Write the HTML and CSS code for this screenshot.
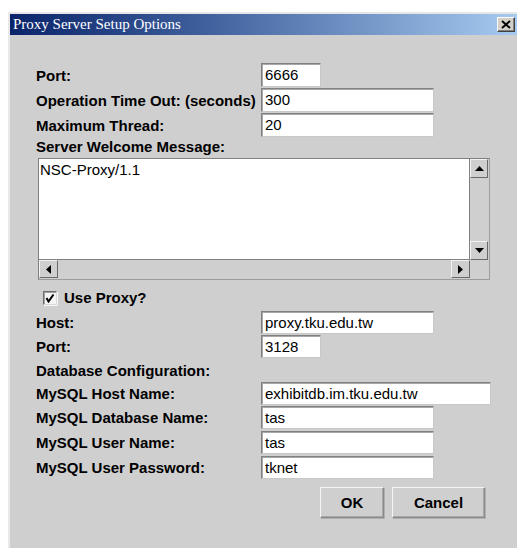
FILE: index.html
```html
<!DOCTYPE html>
<html lang="en">
<head>
<meta charset="utf-8">
<title>Proxy Server Setup Options</title>
<link rel="stylesheet" href="styles.css">
</head>
<body>
<div class="window">
  <div class="titlebar">
    <span class="title">Proxy Server Setup Options</span>
    <div class="close">
      <svg width="10" height="9" viewBox="0 0 10 9"><path d="M1 1 L9 8 M9 1 L1 8" stroke="#000" stroke-width="2"/></svg>
    </div>
  </div>
  <div class="content">
    <div class="form">
      <span class="label">Port:</span><div class="field short">6666</div>
      <span class="label">Operation Time Out: (seconds)</span><div class="field wide">300</div>
      <span class="label">Maximum Thread:</span><div class="field wide">20</div>
    </div>
    <div class="section-label">Server Welcome Message:</div>
    <div class="scrollpane">
      <div class="viewport">NSC-Proxy/1.1</div>
      <div class="vbar">
        <div class="sbtn"><svg width="9" height="5" viewBox="0 0 9 5"><path d="M4.5 0 L9 5 L0 5 Z" fill="#000"/></svg></div>
        <div class="track"></div>
        <div class="sbtn"><svg width="9" height="5" viewBox="0 0 9 5"><path d="M0 0 L9 0 L4.5 5 Z" fill="#000"/></svg></div>
      </div>
      <div class="hbar">
        <div class="sbtn"><svg width="5" height="9" viewBox="0 0 5 9"><path d="M5 0 L5 9 L0 4.5 Z" fill="#000"/></svg></div>
        <div class="track"></div>
        <div class="sbtn"><svg width="5" height="9" viewBox="0 0 5 9"><path d="M0 0 L5 4.5 L0 9 Z" fill="#000"/></svg></div>
      </div>
      <div class="corner"></div>
    </div>
    <div class="check-row">
      <div class="checkbox"><svg width="10" height="10" viewBox="0 0 10 10"><path d="M1.5 5 L3.5 8.5 L8.5 1.5" fill="none" stroke="#000" stroke-width="2"/></svg></div>
      <span class="label">Use Proxy?</span>
    </div>
    <div class="form lower">
      <span class="label">Host:</span><div class="field wide">proxy.tku.edu.tw</div>
      <span class="label">Port:</span><div class="field short">3128</div>
      <span class="label">Database Configuration:</span><div></div>
      <span class="label">MySQL Host Name:</span><div class="field wider">exhibitdb.im.tku.edu.tw</div>
      <span class="label">MySQL Database Name:</span><div class="field wide">tas</div>
      <span class="label">MySQL User Name:</span><div class="field wide">tas</div>
      <span class="label">MySQL User Password:</span><div class="field wide">tknet</div>
    </div>
    <div class="buttons">
      <div class="btn ok">OK</div>
      <div class="btn cancel">Cancel</div>
    </div>
  </div>
</div>
</body>
</html>
```
FILE: styles.css
```css
html, body {
  margin: 0;
  padding: 0;
  overflow: hidden;
  background: #ffffff;
}

body {
  font-family: "Liberation Sans", Arial, sans-serif;
  font-size: 15px;
  color: #000;
}

.window {
  margin: 12px 0 0 8px;
  height: calc(100vh - 12px);
  box-sizing: border-box;
  border-top: 2px solid #e6e6e6;
  border-left: 2px solid #e9e9e9;
  background: #cfcfcf;
  display: flex;
  flex-direction: column;
}

.titlebar {
  height: 21px;
  flex: none;
  background: linear-gradient(to right, #0a246a 0%, #3a5a98 35%, #a6caf0 100%);
  display: flex;
  align-items: center;
  justify-content: space-between;
  padding: 0 2px 0 3px;
}

.title {
  font-family: "Liberation Serif", "Times New Roman", serif;
  font-size: 15px;
  color: #fff;
  line-height: 21px;
}

.close {
  width: 16px;
  height: 13px;
  background: #d4d0c8;
  border: 1px solid;
  border-color: #ffffff #404040 #404040 #ffffff;
  box-shadow: inset -1px -1px 0 #808080;
  display: flex;
  align-items: center;
  justify-content: center;
}

.content {
  flex: 1;
  padding: 28px 32px 0 26px;
  display: flex;
  flex-direction: column;
}

.label {
  font-weight: bold;
  white-space: nowrap;
}

.form {
  display: grid;
  grid-template-columns: 225px auto;
  grid-auto-rows: 24px;
  row-gap: 1px;
  align-items: center;
}

.form.lower {
  grid-template-rows: 24px 24px 23px 24px 25px 25px 25px;
  row-gap: 0;
  align-items: start;
}

.form.lower .label {
  line-height: 23px;
}

.field {
  box-sizing: border-box;
  height: 24px;
  background: #fff;
  border: 1px solid;
  border-color: #808080 #c8c8c8 #c8c8c8 #808080;
  box-shadow: inset 1px 1px 0 #a8a8a8;
  padding: 0 3px;
  line-height: 22px;
  white-space: nowrap;
}

.form.lower .field {
  height: 23px;
  line-height: 21px;
}

.field.short { width: 60px; }
.field.wide { width: 173px; }
.field.wider { width: 230px; }

.section-label {
  font-weight: bold;
  height: 21px;
  line-height: 20px;
}

.scrollpane {
  margin-left: 2px;
  width: 452px;
  height: 122px;
  box-sizing: border-box;
  border: 1px solid;
  border-color: #808080 #9c9c9c #9c9c9c #808080;
  display: grid;
  grid-template-columns: 1fr 19px;
  grid-template-rows: 1fr 19px;
}

.viewport {
  background: #fff;
  padding: 2px 1px;
  line-height: 18px;
  border-right: 1px solid #808080;
  border-bottom: 1px solid #808080;
}

.vbar, .hbar {
  display: flex;
  background: #cfcfcf;
}

.vbar { flex-direction: column; }

.track { flex: 1; }

.sbtn {
  box-sizing: border-box;
  background: #cfcfcf;
  border: 1px solid;
  border-color: #f2f2f2 #6a6a6a #6a6a6a #f2f2f2;
  display: flex;
  align-items: center;
  justify-content: center;
}

.vbar .sbtn { width: 18px; height: 19px; }
.hbar .sbtn { width: 19px; height: 18px; }

.corner { background: #cfcfcf; }

.check-row {
  height: 31px;
  display: flex;
  align-items: center;
  gap: 7px;
  padding: 4px 0 0 7px;
  box-sizing: border-box;
}

.checkbox {
  box-sizing: border-box;
  width: 14px;
  height: 14px;
  background: #f4f4f4;
  border: 1px solid;
  border-color: #6e6e6e #d8d8d8 #d8d8d8 #6e6e6e;
  box-shadow: 1px 1px 0 #f6f6f6, inset 1px 1px 0 #a0a0a0;
  display: flex;
  align-items: center;
  justify-content: center;
}

.buttons {
  display: flex;
  justify-content: flex-end;
  gap: 8px;
  margin-top: 6px;
}

.btn {
  box-sizing: border-box;
  height: 31px;
  border: 1px solid;
  border-color: #f4f4f4 #8a8a8a #8a8a8a #f4f4f4;
  box-shadow: 1px 1px 0 #b0b0b0, inset -1px -1px 0 #a8a8a8;
  font-weight: bold;
  display: flex;
  align-items: center;
  justify-content: center;
}

.btn.ok { width: 64px; }
.btn.cancel { width: 93px; }
```
